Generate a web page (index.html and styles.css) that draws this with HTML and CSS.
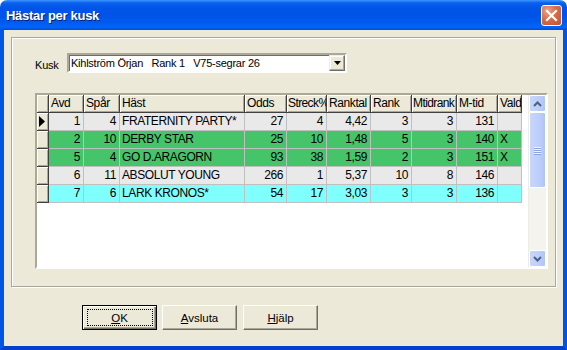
FILE: index.html
```html
<!DOCTYPE html>
<html>
  <head>
    <meta charset="utf-8">
    <link rel="stylesheet" href="styles.css">
  </head>
  <body>
    <div class="window">
      <div class="titlebar">
        <span class="title">Hästar per kusk</span>
        <div class="close">
          <svg width="13" height="13" viewBox="0 0 13 13"><path d="M2 2 L11 11 M11 2 L2 11" stroke="#fff" stroke-width="2.2" stroke-linecap="square"/></svg>
        </div>
      </div>
      <div class="client">
        <div class="group">
          <div class="kusk-row">
            <span class="label">Kusk</span>
            <div class="combo">
              <span class="combo-text">Kihlström Örjan   Rank 1   V75-segrar 26</span>
              <div class="combo-btn">
                <svg width="7" height="4" viewBox="0 0 7 4"><path d="M0 0 H7 L3.5 4 Z" fill="#000"/></svg>
              </div>
            </div>
          </div>
          <div class="grid">
            <div class="grid-body">
              <table>
                <colgroup>
                  <col style="width:12px"><col style="width:35px"><col style="width:36px"><col style="width:125px"><col style="width:42px"><col style="width:40px"><col style="width:44px"><col style="width:41px"><col style="width:45px"><col style="width:41px"><col style="width:24px">
                </colgroup>
                <tr class="head">
                  <th class="ind"></th><th>Avd</th><th>Spår</th><th>Häst</th><th>Odds</th><th class="tight">Streck%</th><th>Ranktal</th><th>Rank</th><th class="tight">Mtidrank</th><th>M-tid</th><th>Vald</th>
                </tr>
                <tr class="gray">
                  <td class="ind"><svg width="6" height="11" viewBox="0 0 6 11"><path d="M0 0 L6 5.5 L0 11 Z" fill="#000"/></svg></td>
                  <td>1</td><td>4</td><td class="name">FRATERNITY PARTY*</td><td>27</td><td>4</td><td>4,42</td><td>3</td><td>3</td><td>131</td><td class="vald"></td>
                </tr>
                <tr class="green">
                  <td class="ind"></td>
                  <td>2</td><td>10</td><td class="name">DERBY STAR</td><td>25</td><td>10</td><td>1,48</td><td>5</td><td>3</td><td>140</td><td class="vald">X</td>
                </tr>
                <tr class="green">
                  <td class="ind"></td>
                  <td>5</td><td>4</td><td class="name">GO D.ARAGORN</td><td>93</td><td>38</td><td>1,59</td><td>2</td><td>3</td><td>151</td><td class="vald">X</td>
                </tr>
                <tr class="gray">
                  <td class="ind"></td>
                  <td>6</td><td>11</td><td class="name">ABSOLUT YOUNG</td><td>266</td><td>1</td><td>5,37</td><td>10</td><td>8</td><td>146</td><td class="vald"></td>
                </tr>
                <tr class="cyan">
                  <td class="ind"></td>
                  <td>7</td><td>6</td><td class="name">LARK KRONOS*</td><td>54</td><td>17</td><td>3,03</td><td>3</td><td>3</td><td>136</td><td class="vald"></td>
                </tr>
              </table>
            </div>
            <div class="scrollbar">
              <div class="sb-btn">
                <svg width="9" height="6" viewBox="0 0 9 6"><path d="M1 5 L4.5 1.5 L8 5" stroke="#4D6185" stroke-width="2" fill="none"/></svg>
              </div>
              <div class="sb-thumb">
                <div class="grip"></div><div class="grip"></div><div class="grip"></div><div class="grip"></div>
              </div>
              <div class="sb-track"></div>
              <div class="sb-btn">
                <svg width="9" height="6" viewBox="0 0 9 6"><path d="M1 1 L4.5 4.5 L8 1" stroke="#4D6185" stroke-width="2" fill="none"/></svg>
              </div>
            </div>
          </div>
        </div>
        <div class="buttons">
          <div class="btn default"><span class="focus"><u>O</u>K</span></div>
          <div class="btn"><span><u>A</u>vsluta</span></div>
          <div class="btn"><span><u>H</u>jälp</span></div>
        </div>
      </div>
    </div>
  </body>
</html>
```

FILE: styles.css
```css
body {
  margin: 0;
  background: #ffffff;
  font-family: "Liberation Sans", Arial, sans-serif;
}

.window {
  width: 567px;
  height: 350px;
  display: flex;
  flex-direction: column;
}

.titlebar {
  height: 30px;
  border-radius: 7px 7px 0 0;
  background: linear-gradient(to bottom, #3d95ff 0px, #0a5fec 3px, #0055e8 8px, #0053e6 15px, #0059ee 22px, #0066fb 27px, #004bd8 30px);
  display: flex;
  align-items: center;
  justify-content: space-between;
  padding: 0 5px 0 6px;
}

.title {
  color: #ffffff;
  font-weight: bold;
  font-size: 13px;
  letter-spacing: -0.3px;
  text-shadow: 1px 1px 0 #0a1e7a;
  margin-top: 1px;
}

.close {
  width: 19px;
  height: 19px;
  border: 1px solid #ffffff;
  border-radius: 3px;
  background: radial-gradient(circle at 30% 25%, #e8a58c 0%, #d76c4c 45%, #c4502e 100%);
  display: flex;
  align-items: center;
  justify-content: center;
  margin-top: 1px;
}

.client {
  flex: 1;
  background: #ece9d8;
  border-left: 4px solid #0055e5;
  border-right: 4px solid #0055e5;
  border-bottom: 4px solid #0042c8;
}

.group {
  margin: 7px 0 0 7px;
  width: 543px;
  height: 248px;
  border: 1px solid #aca899;
  box-shadow: 1px 1px 0 #ffffff, inset 1px 1px 0 #ffffff;
}

.kusk-row {
  display: flex;
  align-items: center;
  margin: 15px 0 0 23px;
  font-size: 11px;
  letter-spacing: -0.2px;
}

.label {
  width: 32px;
  margin-top: 4px;
}

.combo {
  width: 276px;
  height: 16px;
  border: 2px solid;
  border-color: #aca899 #ffffff #ffffff #aca899;
  box-shadow: inset 1px 1px 0 #716f64;
  background: #ffffff;
  display: flex;
  align-items: center;
  justify-content: space-between;
}

.combo-text {
  white-space: pre;
  padding-left: 2px;
  font-size: 11px;
  letter-spacing: -0.25px;
}

.combo-btn {
  width: 16px;
  height: 16px;
  box-sizing: border-box;
  background: #ece9d8;
  border: 1px solid;
  border-color: #f1efe2 #716f64 #716f64 #f1efe2;
  box-shadow: inset -1px -1px 0 #aca899, inset 1px 1px 0 #ffffff;
  display: flex;
  align-items: center;
  justify-content: center;
}

.grid {
  margin: 20px 0 0 23px;
  width: 509px;
  height: 172px;
  border: 2px solid;
  border-color: #aca899 #ffffff #ffffff #aca899;
  background: #ffffff;
  display: flex;
  justify-content: space-between;
}

.grid-body {
  flex: 1;
}

table {
  width: 485px;
  border-collapse: separate;
  border-spacing: 0;
  table-layout: fixed;
  font-size: 12px;
  letter-spacing: -0.4px;
}

th, td {
  padding: 0 3px 0 0;
  box-sizing: border-box;
  white-space: nowrap;
  overflow: hidden;
  line-height: 17px;
}

th {
  height: 18px;
  font-weight: normal;
  text-align: left;
  padding-left: 2px;
  background: #ece9d8;
  border-right: 1px solid #404040;
  border-bottom: 1px solid #404040;
  box-shadow: inset 1px 1px 0 #ffffff, inset -1px -1px 0 #aca899;
}

th.tight {
  padding: 0 0 0 1px;
  letter-spacing: -0.6px;
}

td {
  height: 18px;
  text-align: right;
  border-right: 1px solid #c0c0c0;
  border-bottom: 1px solid #c0c0c0;
}

td.name, td.vald {
  text-align: left;
  padding-left: 2px;
}

td.ind {
  background: #ece9d8;
  border-right: 1px solid #404040;
  border-bottom: 1px solid #404040;
  box-shadow: inset 1px 1px 0 #ffffff, inset -1px -1px 0 #aca899;
  padding: 0;
  text-align: left;
}

td.ind svg {
  display: block;
  margin-left: 2px;
}

.gray td {
  background: #e9e9e9;
}

.green td {
  background: #45c46a;
}

.cyan td {
  background: #80ffff;
}

.gray td.ind, .green td.ind, .cyan td.ind {
  background: #ece9d8;
}

.scrollbar {
  width: 17px;
  display: flex;
  flex-direction: column;
  background: #f4f3ee;
  border-left: 1px solid #eeede5;
}

.sb-btn, .sb-thumb {
  box-sizing: border-box;
  border: 1px solid #ffffff;
  border-radius: 2px;
  background: linear-gradient(to right, #c8d6fb, #bccefa 60%, #b0c4f7);
  display: flex;
  align-items: center;
  justify-content: center;
}

.sb-btn {
  height: 17px;
}

.sb-thumb {
  height: 76px;
  flex-direction: column;
  gap: 1px;
}

.grip {
  width: 7px;
  height: 1px;
  background: #eef3fe;
  box-shadow: 0 1px 0 #8ca2d8;
}

.sb-track {
  flex: 1;
}

.buttons {
  display: flex;
  margin: 18px 0 0 78px;
}

.btn {
  width: 75px;
  height: 25px;
  box-sizing: border-box;
  margin-right: 6px;
  background: #ece9d8;
  border: 1px solid;
  border-color: #ffffff #716f64 #716f64 #ffffff;
  box-shadow: inset -1px -1px 0 #aca899;
  display: flex;
  align-items: center;
  justify-content: center;
  font-size: 11.5px;
}

.btn.default {
  margin-right: 5px;
  border: 1px solid #000000;
  box-shadow: inset 1px 1px 0 #ffffff, inset -1px -1px 0 #716f64, inset -2px -2px 0 #aca899;
}

.focus {
  width: 64px;
  height: 15px;
  border: 1px dotted #000000;
  display: flex;
  align-items: center;
  justify-content: center;
}
```
